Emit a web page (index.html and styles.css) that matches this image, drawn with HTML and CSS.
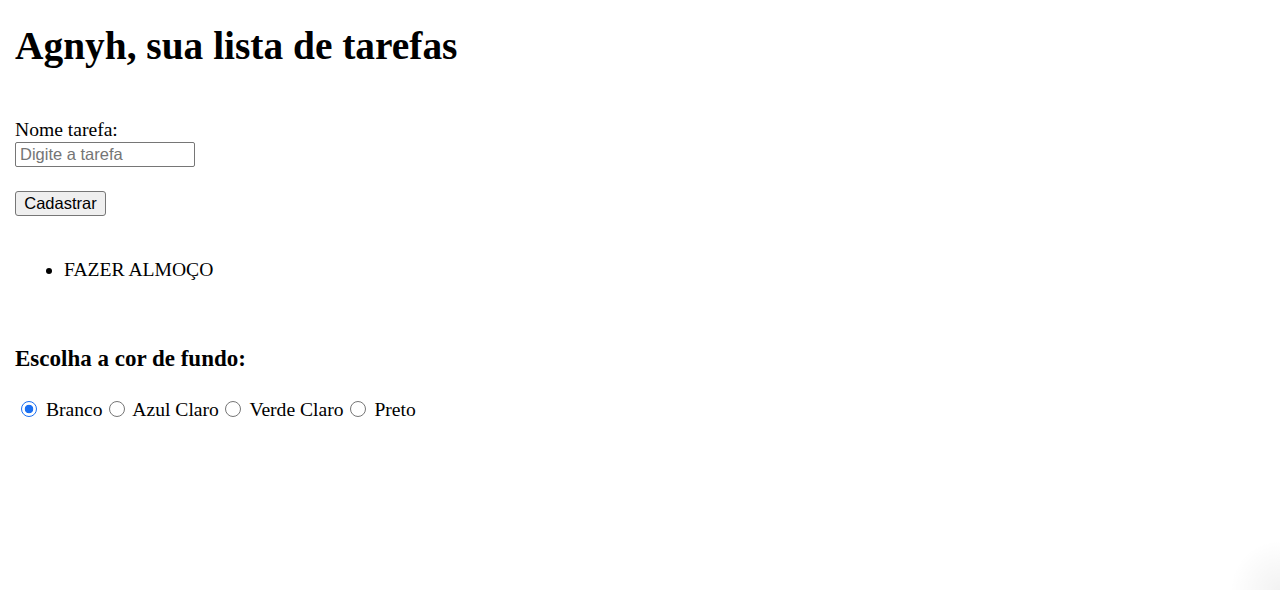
FILE: index.html
```html
<!DOCTYPE html>
<html lang="pt-BR">
<head>
<meta charset="utf-8">
<title>Lista de tarefas</title>
<link rel="stylesheet" href="styles.css">
</head>
<body>
<h1 class="title">Agnyh, sua lista de tarefas</h1>
<form class="task-form">
  <label class="field-label" for="tarefa">Nome tarefa:</label>
  <input class="field-input" id="tarefa" type="text" placeholder="Digite a tarefa">
  <button class="submit-btn" type="button">Cadastrar</button>
</form>
<ul class="task-list">
  <li class="task-item">FAZER ALMOÇO</li>
</ul>
<h3 class="bg-title">Escolha a cor de fundo:</h3>
<div class="bg-options">
  <input class="bg-radio" type="radio" name="cor" checked><span class="bg-label">Branco</span><input class="bg-radio" type="radio" name="cor"><span class="bg-label">Azul Claro</span><input class="bg-radio" type="radio" name="cor"><span class="bg-label">Verde Claro</span><input class="bg-radio" type="radio" name="cor"><span class="bg-label">Preto</span>
</div>
</body>
</html>
```
FILE: styles.css
```css
html {
  background: #fff radial-gradient(circle at 100% 100%, rgba(0,0,0,0.05), rgba(0,0,0,0) 50px) no-repeat;
  min-height: 100%;
}
body {
  margin: 0;
  padding: 0 15px;
  font-family: "Liberation Serif", "Times New Roman", serif;
  font-size: 19.6px;
  color: #000;
}
.title {
  margin: 22px 0 0;
  font-size: 39.4px;
  line-height: 48px;
  font-weight: bold;
}
.task-form {
  margin-top: 48px;
}
.field-label {
  display: block;
  line-height: 23px;
}
.field-input {
  display: block;
  box-sizing: border-box;
  margin: 1px 0 0;
  width: 180px;
  height: 25px;
  padding: 0 4px;
  border: 1px solid #767676;
  border-radius: 2px;
  font-family: "Liberation Sans", Arial, sans-serif;
  font-size: 16.5px;
}
.field-input::placeholder {
  color: #757575;
}
.submit-btn {
  display: block;
  box-sizing: border-box;
  margin-top: 24px;
  width: 91px;
  height: 25px;
  padding: 0;
  border: 1px solid #767676;
  border-radius: 3px;
  background: #efefef;
  font-family: "Liberation Sans", Arial, sans-serif;
  font-size: 16.5px;
  color: #000;
}
.task-list {
  margin: 42px 0 0;
  padding-left: 49px;
}
.task-item {
  line-height: 23px;
}
.bg-title {
  margin: 65px 0 0;
  font-size: 23px;
  line-height: 26px;
  font-weight: bold;
}
.bg-options {
  margin-top: 26px;
  line-height: 23px;
}
.bg-radio {
  -webkit-appearance: none;
  appearance: none;
  box-sizing: border-box;
  width: 16px;
  height: 16px;
  margin: 0 4px 0 6px;
  border: 1px solid #767676;
  border-radius: 50%;
  background: #fff;
  vertical-align: -1px;
}
.bg-radio:checked {
  border: 1.5px solid #1a6ff2;
  background: radial-gradient(circle, #1a6ff2 0, #1a6ff2 4px, #fff 4.6px);
}
.bg-label::before {
  content: " ";
  white-space: pre;
}
```
